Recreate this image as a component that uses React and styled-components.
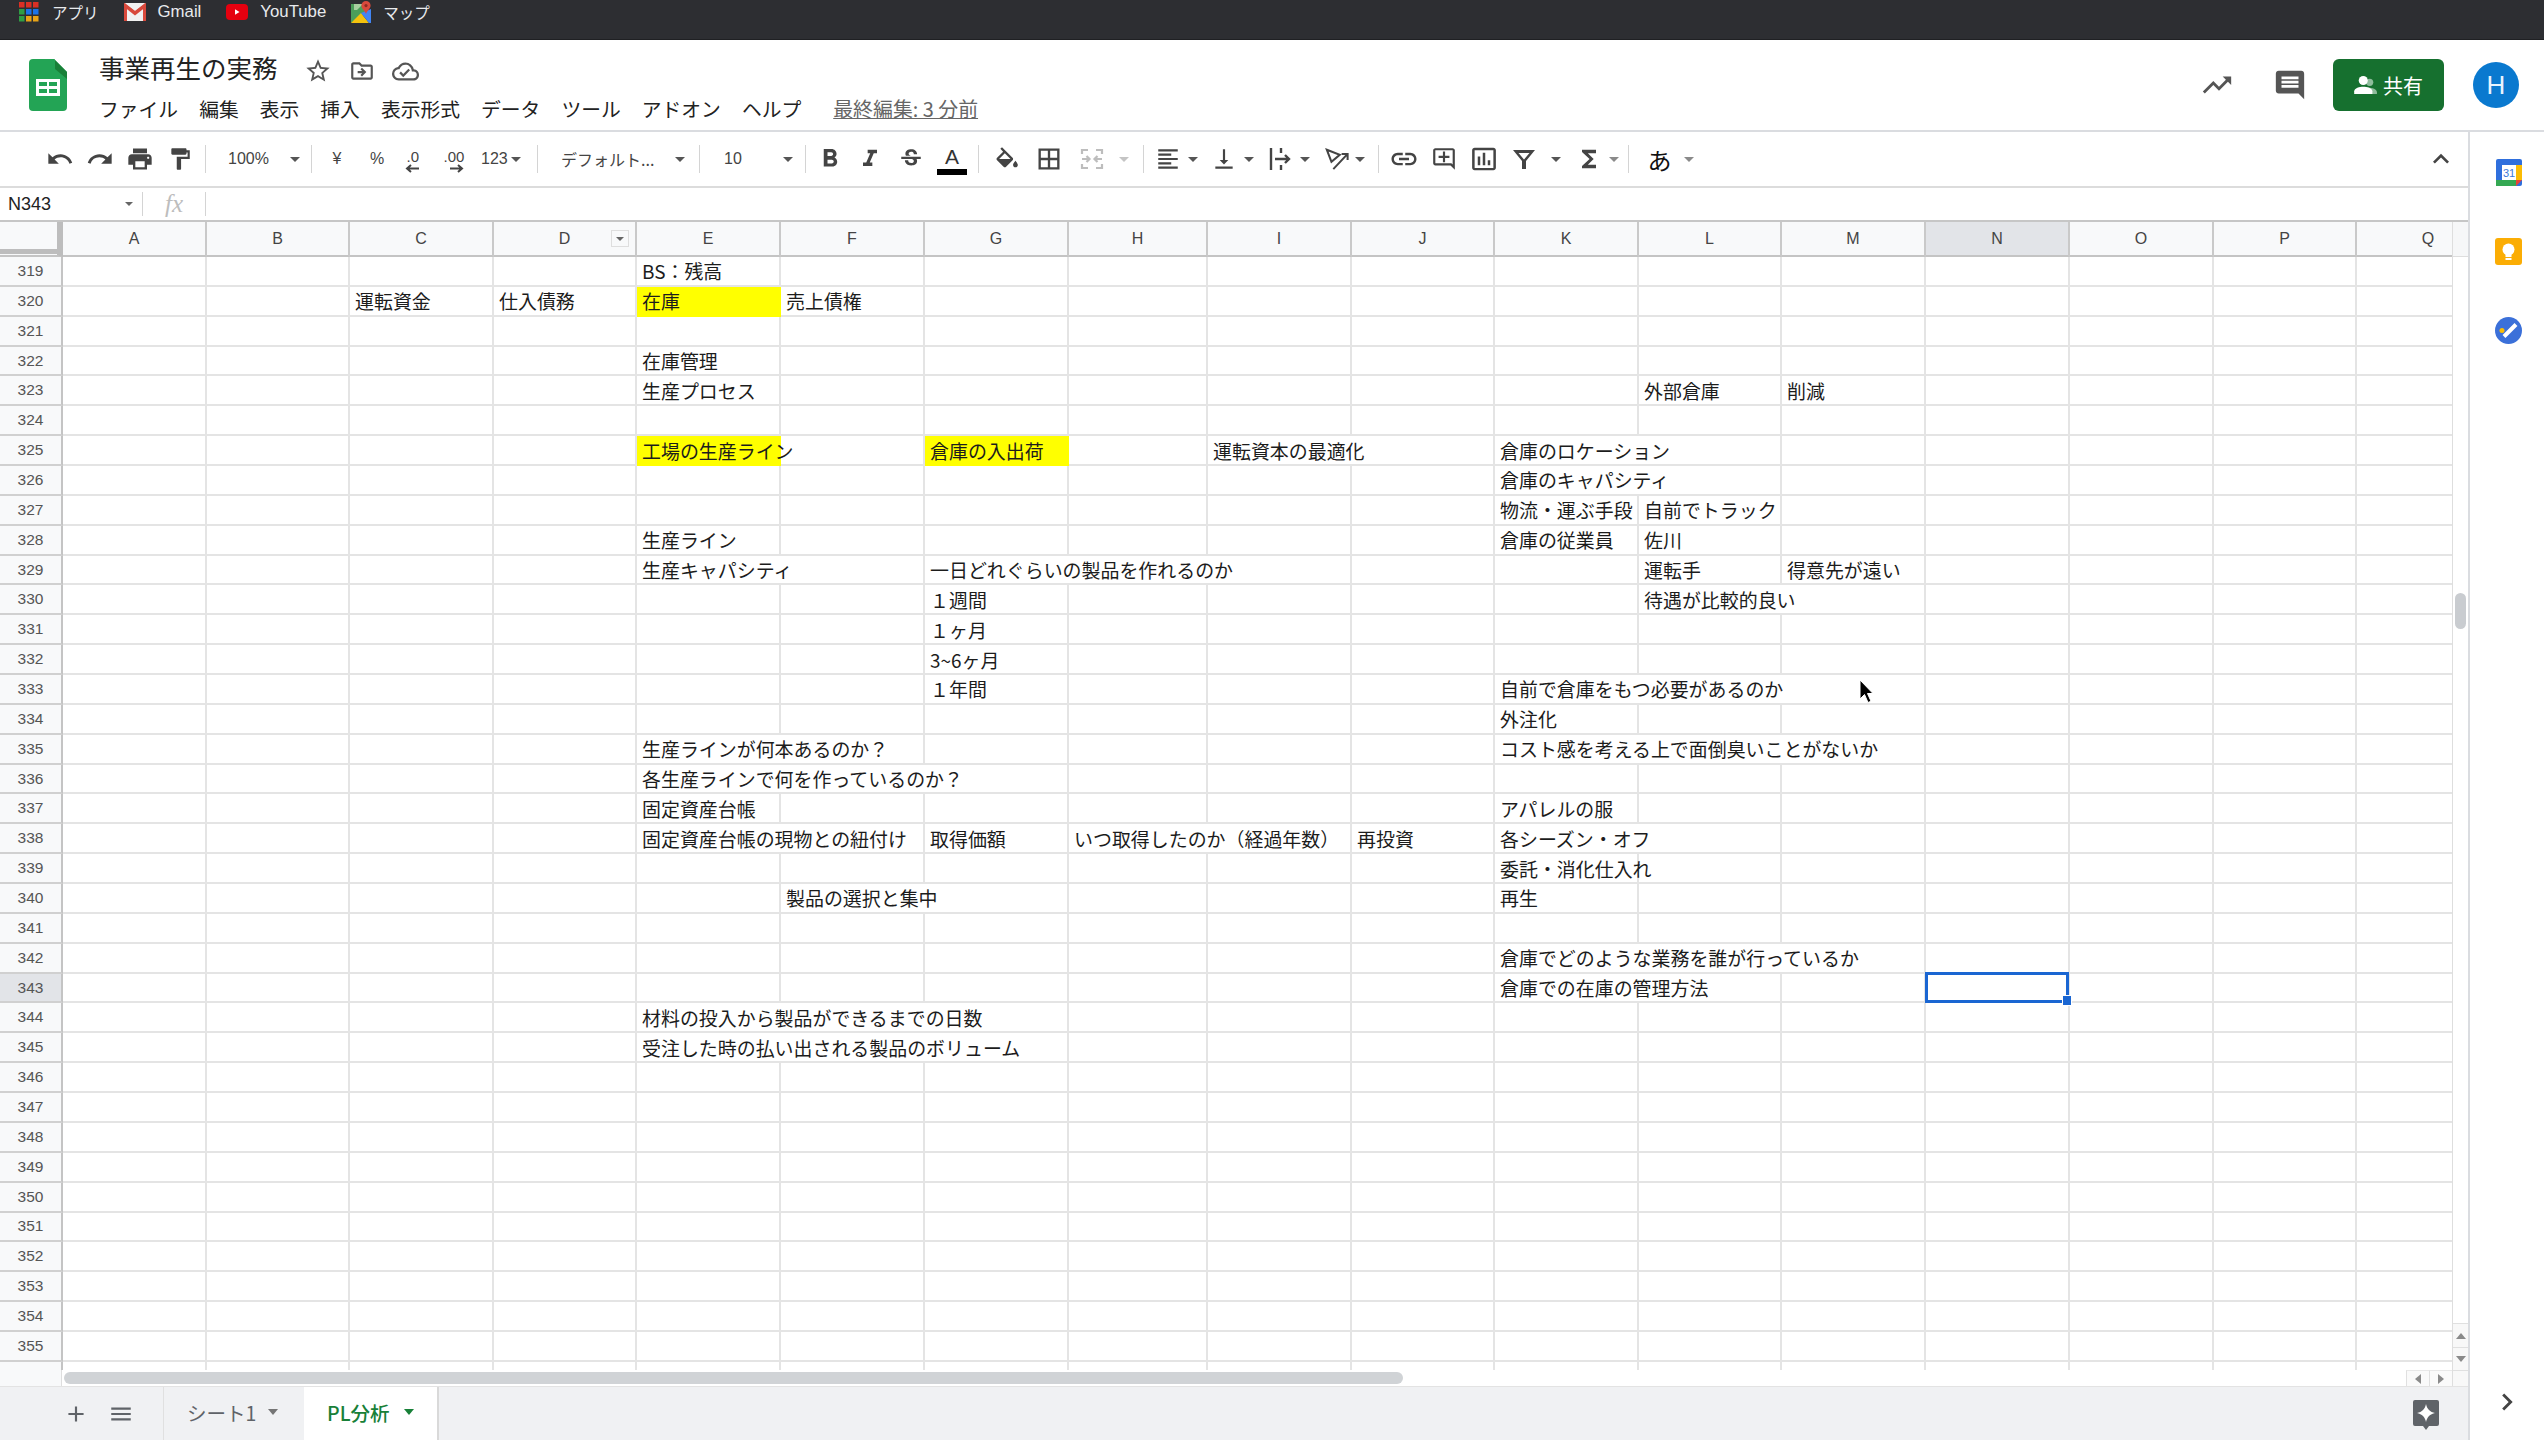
import React from 'react';
import styled, { createGlobalStyle } from 'styled-components';
import {
  MdUndo, MdRedo, MdPrint, MdFormatPaint, MdFormatBold, MdFormatItalic, MdStrikethroughS,
  MdBorderAll, MdFormatAlignLeft, MdVerticalAlignBottom, MdLink, MdOutlineAddComment,
  MdInsertChartOutlined, MdKeyboardArrowUp, MdStarBorder, MdOutlineDriveFileMove,
  MdOutlineCloudDone, MdTrendingUp, MdComment, MdAdd, MdMenu, MdChevronRight, MdFunctions,
} from 'react-icons/md';

const SANS = '"Liberation Sans", "Noto Sans CJK JP", sans-serif';
const JP = '"Noto Sans CJK JP", "Liberation Sans", sans-serif';

const GlobalStyle = createGlobalStyle`
  html, body { margin: 0; padding: 0; background: #fff; }
  body { font-family: ${SANS}; color: #222; }
  * { box-sizing: border-box; }
`;

const Page = styled.div`
  position: relative;
  width: 2544px;
  height: 1440px;
  display: flex;
  flex-direction: column;
  overflow: hidden;
`;

/* browser bookmarks */
const BookmarkBar = styled.div`
  height: 40px;
  flex: none;
  display: flex;
  gap: 25px;
  padding-left: 19px;
  background: #2d2e32;
  border-bottom: 1px solid #1f2023;
`;
const Bookmark = styled.div`
  height: 24px;
  display: flex;
  align-items: center;
  gap: ${p => p.$gap || 12}px;
  color: #e8eaed;
  font-size: ${p => (p.$jp ? 15.5 : 16.8)}px;
  font-family: ${p => (p.$jp ? JP : SANS)};
`;

/* doc header */
const DocHeader = styled.header`
  height: 92px;
  flex: none;
  display: flex;
  padding-left: 29px;
  border-bottom: 2px solid #dadce0;
`;
const LogoWrap = styled.div`
  padding-top: 19px;
  margin-right: 32px;
`;
const TitleBlock = styled.div`
  padding-top: 14px;
  display: flex;
  flex-direction: column;
`;
const TitleRow = styled.div`
  height: 34px;
  display: flex;
  align-items: center;
  gap: 17px;
  color: #555;
`;
const Title = styled.div`
  align-self: flex-start;
  margin-top: -6px;
  margin-right: 9px;
  font-family: ${JP};
  font-size: 25.5px;
  color: #222;
  white-space: nowrap;
`;
const MenuRow = styled.nav`
  margin-top: 5px;
  height: 30px;
  display: flex;
  align-items: center;
  gap: 21px;
`;
const MenuItem = styled.span`
  font-family: ${JP};
  font-size: 19.8px;
  color: #222;
  white-space: nowrap;
`;
const LastEdit = styled.span`
  margin-left: 11px;
  font-family: ${JP};
  font-size: 19.9px;
  color: #666;
  text-decoration: underline;
  white-space: nowrap;
`;
const HeaderActions = styled.div`
  margin-left: auto;
  padding-right: 25px;
  display: flex;
  align-items: center;
  color: #555;
`;
const ActionIcon = styled.div`
  display: flex;
  margin-right: ${p => p.$mr}px;
`;
const ShareButton = styled.div`
  width: 111px;
  height: 52px;
  margin-right: 29px;
  display: flex;
  align-items: center;
  justify-content: center;
  gap: 5px;
  background: #16702f;
  border-radius: 6px;
  color: #fff;
  font-family: ${JP};
  font-size: 20px;
`;
const Avatar = styled.div`
  width: 46px;
  height: 46px;
  border-radius: 50%;
  background: #0a79cf;
  color: #e8f4ff;
  display: flex;
  align-items: center;
  justify-content: center;
  font-size: 26px;
`;

const Workspace = styled.div`
  flex: 1;
  min-height: 0;
  display: flex;
`;
const MainColumn = styled.div`
  width: 2468px;
  flex: none;
  display: flex;
  flex-direction: column;
`;

/* toolbar */
const Toolbar = styled.div`
  height: 56px;
  flex: none;
  display: flex;
  align-items: center;
  padding-left: 40px;
  border-bottom: 2px solid #dcdcdc;
  color: #444;
`;
const Tool = styled.div`
  width: ${p => p.$w}px;
  height: 44px;
  flex: none;
  display: flex;
  align-items: center;
  justify-content: ${p => p.$justify || 'center'};
  gap: ${p => p.$gap || 0}px;
  padding: ${p => p.$pad || 0};
  font-size: 16px;
  color: ${p => (p.$off ? '#bdbdbd' : '#444')};
`;
const ToolDivider = styled.div`
  width: 1px;
  height: 28px;
  flex: none;
  margin: 0 5px;
  background: #d4d4d4;
`;
const Caret = styled.span`
  width: 0;
  height: 0;
  flex: none;
  border-left: 5px solid transparent;
  border-right: 5px solid transparent;
  border-top: 5px solid ${p => (p.$off ? '#c4c4c4' : p.$soft ? '#8a8a8a' : '#555')};
`;
const DecimalStack = styled.div`
  display: flex;
  flex-direction: column;
  align-items: flex-end;
  line-height: 15px;
  font-size: 15px;
  padding-top: 3px;
`;
const ColorA = styled.div`
  width: 30px;
  display: flex;
  flex-direction: column;
  align-items: center;
  font-size: 21px;
  line-height: 22px;
  color: #333;
  padding-top: 3px;
`;
const ColorBar = styled.div`
  width: 30px;
  height: 6px;
  margin-top: 1px;
  background: #000;
`;
const Kana = styled.span`
  font-family: ${JP};
  font-size: ${p => p.$size || 16}px;
  color: ${p => p.$color || 'inherit'};
`;
const CollapseTool = styled.div`
  margin-left: auto;
  margin-right: 7px;
  width: 40px;
  display: flex;
  justify-content: center;
  color: #444;
`;

/* formula bar */
const FormulaBar = styled.div`
  height: 34px;
  flex: none;
  display: flex;
  align-items: center;
  border-bottom: 2px solid #c6c6c6;
`;
const NameBox = styled.div`
  width: 142px;
  padding: 0 9px 0 8px;
  display: flex;
  align-items: center;
  justify-content: space-between;
  font-size: 18px;
  color: #222;
`;
const SmallCaret = styled.span`
  width: 0;
  height: 0;
  border-left: 4px solid transparent;
  border-right: 4px solid transparent;
  border-top: 4px solid #666;
`;
const FormulaDivider = styled.div`
  width: 1px;
  height: 24px;
  background: #d4d4d4;
`;
const FxLabel = styled.div`
  width: 62px;
  text-align: center;
  font-family: "Liberation Serif", serif;
  font-style: italic;
  font-size: 25px;
  line-height: 30px;
  color: #bdbdbd;
`;

/* sheet */
const SheetArea = styled.div`
  flex: 1;
  min-height: 0;
  display: flex;
`;
const GridPane = styled.div`
  width: 2452px;
  flex: none;
  display: flex;
  flex-direction: column;
  overflow: hidden;
`;
const COLUMN_TEMPLATE = '63px 144px 143px 144px 143px 144px 144px 144px 139px 144px 143px 144px 143px 144px 144px 144px 143px 144px';

const ColumnHeader = styled.div`
  height: 35px;
  flex: none;
  display: grid;
  grid-template-columns: ${COLUMN_TEMPLATE};
  background: #f8f9fa;
`;
const CornerCell = styled.div`
  border-right: 6px solid #bdbdbd;
  border-bottom: 2px solid #c4c4c4;
  display: flex;
  align-items: flex-end;
  padding-bottom: 1px;
`;
const CornerBar = styled.div`
  width: 100%;
  height: 5px;
  background: #bdbdbd;
`;
const ColumnCell = styled.div`
  position: relative;
  display: flex;
  align-items: center;
  justify-content: center;
  font-size: 16px;
  color: #444;
  padding-top: 1px;
  border-right: 2px solid #c9c9c9;
  border-bottom: 2px solid #c4c4c4;
  background: ${p => (p.$active ? '#e2e4e8' : 'transparent')};
`;
const FilterChip = styled.div`
  position: absolute;
  right: 6px;
  top: 8px;
  width: 18px;
  height: 17px;
  border: 1px solid #dedede;
  display: flex;
  align-items: center;
  justify-content: center;
`;
const RowsViewport = styled.div`
  flex: 1;
  min-height: 0;
  overflow: hidden;
`;
const SheetRow = styled.div`
  height: 29.865px;
  display: grid;
  grid-template-columns: ${COLUMN_TEMPLATE};
`;
const RowLabel = styled.div`
  display: flex;
  align-items: center;
  justify-content: center;
  font-size: 15.5px;
  color: #555;
  background: ${p => (p.$active ? '#e2e4e8' : '#f8f9fa')};
  border-right: 2px solid #c4c4c4;
  border-bottom: 2px solid #d0d0d0;
`;
const Cell = styled.div`
  grid-column: span ${p => p.$span || 1};
  position: ${p => (p.$selected ? 'relative' : 'static')};
  display: flex;
  align-items: center;
  padding-left: 5px;
  font-family: ${JP};
  font-size: 18.95px;
  color: #1c1c1c;
  white-space: nowrap;
  min-width: 0;
  background: ${p => p.$fill || 'transparent'};
  border-right: 2px solid ${p => p.$fill || '#e4e4e4'};
  border-bottom: 2px solid ${p => p.$fill || '#e4e4e4'};
`;
const Selection = styled.div`
  position: absolute;
  left: -1px;
  right: -1px;
  top: -2px;
  bottom: -2px;
  border: 3px solid #1a66d2;
`;
const FillHandle = styled.div`
  position: absolute;
  right: -6px;
  bottom: -6px;
  width: 10px;
  height: 11px;
  background: #1a66d2;
  border: 1px solid #fff;
`;
const HorizontalBar = styled.div`
  height: 16px;
  flex: none;
  display: flex;
  align-items: center;
  position: relative;
`;
const BarGutter = styled.div`
  width: 62px;
  height: 16px;
  flex: none;
  background: #f8f9fa;
  border-right: 1px solid #dedede;
`;
const BarThumb = styled.div`
  width: 1339px;
  height: 12px;
  margin-left: 2px;
  border-radius: 6px;
  background: #d0d3d6;
`;
const BarArrows = styled.div`
  margin-left: auto;
  display: flex;
`;
const BarArrow = styled.div`
  width: 23px;
  height: 16px;
  display: flex;
  align-items: center;
  justify-content: center;
  border-left: 1px solid #e0e0e0;
  border-top: 1px solid #e8e8e8;
  background: #fafafa;
`;
const VerticalRail = styled.div`
  width: 16px;
  flex: none;
  display: flex;
  flex-direction: column;
  border-left: 1px solid #dedede;
`;
const RailHead = styled.div`
  height: 35px;
  flex: none;
  background: #f6f7f8;
  border-bottom: 1px solid #dedede;
`;
const RailTrack = styled.div`
  flex: 1;
  position: relative;
`;
const RailThumb = styled.div`
  position: absolute;
  left: 2px;
  top: 336px;
  width: 11px;
  height: 36px;
  border-radius: 6px;
  background: #c9ccd0;
`;
const RailButton = styled.div`
  height: ${p => p.$h}px;
  flex: none;
  display: flex;
  align-items: center;
  justify-content: center;
  background: #f8f8f8;
  border-top: 1px solid #e0e0e0;
`;
const Triangle = styled.span`
  width: 0;
  height: 0;
  ${p => p.$dir === 'up' && 'border-left: 5px solid transparent; border-right: 5px solid transparent; border-bottom: 6px solid #8a8a8a;'}
  ${p => p.$dir === 'down' && 'border-left: 5px solid transparent; border-right: 5px solid transparent; border-top: 6px solid #8a8a8a;'}
  ${p => p.$dir === 'left' && 'border-top: 5px solid transparent; border-bottom: 5px solid transparent; border-right: 6px solid #8a8a8a;'}
  ${p => p.$dir === 'right' && 'border-top: 5px solid transparent; border-bottom: 5px solid transparent; border-left: 6px solid #8a8a8a;'}
`;

/* sheet tabs */
const TabBar = styled.div`
  height: 54px;
  flex: none;
  display: flex;
  align-items: stretch;
  background: #f0f1f3;
  border-top: 1px solid #e3e3e3;
  padding-left: 56px;
`;
const TabAction = styled.div`
  width: ${p => p.$w}px;
  display: flex;
  align-items: center;
  justify-content: center;
  color: #5f6368;
`;
const SheetTab = styled.div`
  width: ${p => p.$w}px;
  flex: none;
  display: flex;
  align-items: center;
  gap: ${p => p.$gap}px;
  padding: 0 0 3px 23px;
  font-family: ${JP};
  font-size: 19.5px;
  color: ${p => (p.$active ? '#188038' : '#5f6368')};
  font-weight: ${p => (p.$active ? 500 : 400)};
  background: ${p => (p.$active ? '#fff' : 'transparent')};
  border-left: ${p => (p.$first ? '1px solid #e0e0e0' : 'none')};
  border-right: ${p => (p.$active ? '2px solid #d9d9d9' : 'none')};
`;
const TabCaret = styled.span`
  width: 0;
  height: 0;
  border-left: 5px solid transparent;
  border-right: 5px solid transparent;
  border-top: 6px solid ${p => (p.$active ? '#188038' : '#757575')};
`;
const ExploreWrap = styled.div`
  margin-left: auto;
  margin-right: 29px;
  display: flex;
  align-items: center;
  padding-top: 3px;
`;

/* side panel */
const SidePanel = styled.aside`
  flex: 1;
  display: flex;
  flex-direction: column;
  align-items: center;
  padding: 27px 0 21px 3px;
  gap: 52px;
  border-left: 2px solid #dadce0;
`;
const PanelToggle = styled.div`
  margin-top: auto;
  margin-right: 4px;
  display: flex;
  color: #444;
`;

const CursorArrow = styled.svg`
  position: absolute;
  left: 1859px;
  top: 679px;
`;

const columnNames = 'ABCDEFGHIJKLMNOPQ'.split('');

const YELLOW = '#ffff00';
// col index -> [text, span, fill]
const sheetData = {
  319: { 4: ['BS：残高'] },
  320: { 2: ['運転資金'], 3: ['仕入債務'], 4: ['在庫', 1, YELLOW], 5: ['売上債権'] },
  322: { 4: ['在庫管理'] },
  323: { 4: ['生産プロセス'], 11: ['外部倉庫'], 12: ['削減'] },
  325: { 4: ['工場の生産ライン', 1, YELLOW], 6: ['倉庫の入出荷', 1, YELLOW], 8: ['運転資本の最適化', 2], 10: ['倉庫のロケーション', 2] },
  326: { 10: ['倉庫のキャパシティ', 2] },
  327: { 10: ['物流・運ぶ手段'], 11: ['自前でトラック'] },
  328: { 4: ['生産ライン'], 10: ['倉庫の従業員'], 11: ['佐川'] },
  329: { 4: ['生産キャパシティ', 2], 6: ['一日どれぐらいの製品を作れるのか', 3], 11: ['運転手'], 12: ['得意先が遠い'] },
  330: { 6: ['１週間'], 11: ['待遇が比較的良い', 2] },
  331: { 6: ['１ヶ月'] },
  332: { 6: ['3~6ヶ月'] },
  333: { 6: ['１年間'], 10: ['自前で倉庫をもつ必要があるのか', 3] },
  334: { 10: ['外注化'] },
  335: { 4: ['生産ラインが何本あるのか？', 2], 10: ['コスト感を考える上で面倒臭いことがないか', 3] },
  336: { 4: ['各生産ラインで何を作っているのか？', 3] },
  337: { 4: ['固定資産台帳'], 10: ['アパレルの服'] },
  338: { 4: ['固定資産台帳の現物との紐付け', 2], 6: ['取得価額'], 7: ['いつ取得したのか（経過年数）', 2], 9: ['再投資'], 10: ['各シーズン・オフ', 2] },
  339: { 10: ['委託・消化仕入れ'] },
  340: { 5: ['製品の選択と集中', 2], 10: ['再生'] },
  342: { 10: ['倉庫でどのような業務を誰が行っているか', 3] },
  343: { 10: ['倉庫での在庫の管理方法', 2] },
  344: { 4: ['材料の投入から製品ができるまでの日数', 3] },
  345: { 4: ['受注した時の払い出される製品のボリューム', 3] },
};

const ACTIVE_ROW = 343;
const ACTIVE_COL = 13;

function renderCells(rowNumber) {
  const data = sheetData[rowNumber] || {};
  const cells = [];
  for (let col = 0; col < columnNames.length; col++) {
    const entry = data[col];
    if (entry) {
      const [text, span = 1, fill] = entry;
      cells.push(<Cell key={col} $span={span} $fill={fill}>{text}</Cell>);
      col += span - 1;
    } else {
      const selected = rowNumber === ACTIVE_ROW && col === ACTIVE_COL;
      cells.push(
        <Cell key={col} $selected={selected}>
          {selected && <Selection><FillHandle /></Selection>}
        </Cell>
      );
    }
  }
  return cells;
}

const rowNumbers = Array.from({ length: 38 }, (_, i) => 319 + i);

function SheetsLogo() {
  return (
    <svg width="38" height="52" viewBox="0 0 38 52">
      <path d="M4 0H25L38 13V48a4 4 0 0 1-4 4H4a4 4 0 0 1-4-4V4a4 4 0 0 1 4-4z" fill="#23a455" />
      <path d="M25 0L38 13V20L26 10V0z" fill="#188038" />
      <rect x="7" y="20" width="24" height="17" fill="#fff" />
      <rect x="10" y="23" width="8" height="4" fill="#23a455" />
      <rect x="20" y="23" width="8" height="4" fill="#23a455" />
      <rect x="10" y="30" width="8" height="4" fill="#23a455" />
      <rect x="20" y="30" width="8" height="4" fill="#23a455" />
    </svg>
  );
}

function AppsIcon() {
  const colors = ['#d93025', '#d93025', '#d93025', '#2f9e44', '#1a73e8', '#1a73e8', '#2f9e44', '#e8a317', '#e8a317'];
  return (
    <svg width="20" height="20" viewBox="0 0 20 20">
      {colors.map((c, i) => (
        <rect key={i} x={(i % 3) * 7} y={Math.floor(i / 3) * 7} width="5.5" height="5.5" fill={c} />
      ))}
    </svg>
  );
}

function GmailIcon() {
  return (
    <svg width="22" height="18" viewBox="0 0 22 18">
      <rect width="22" height="18" rx="1.5" fill="#f1f1f1" />
      <path d="M1.5 18V3L11 10.5 20.5 3V18" fill="none" stroke="#d8493c" strokeWidth="3" />
      <path d="M0 1L11 9.5 22 1" fill="none" stroke="#d8493c" strokeWidth="2.4" />
    </svg>
  );
}

function YoutubeIcon() {
  return (
    <svg width="22" height="16" viewBox="0 0 22 16">
      <rect width="22" height="16" rx="4" fill="#e5000f" />
      <path d="M9 5.2L13.5 8 9 10.8z" fill="#fff" />
    </svg>
  );
}

function MapsIcon() {
  return (
    <svg width="20" height="22" viewBox="0 0 20 22">
      <path d="M0 3H14V12L0 22z" fill="#4b9e5a" />
      <path d="M0 22L10 12l8 10z" fill="#f4c20d" />
      <path d="M10 12L20 8v14h-2z" fill="#4285f4" />
      <path d="M3 3h9L6 9H3z" fill="#a8cfa0" />
      <path d="M15 0a4.6 4.6 0 0 1 4.6 4.6C19.6 8 16 10 15 13c-1-3-4.6-5-4.6-8.400A4.600 4.600 0 0 1 15 0z" fill="#d8493c" />
      <circle cx="15" cy="4.600" r="1.600" fill="#8f2a21" />
    </svg>
  );
}

function ShareIcon() {
  return (
    <svg width="24" height="20" viewBox="0 0 26 22">
      <circle cx="17" cy="8" r="4" fill="#8fbc9c" />
      <path d="M15 14c5 0 10 1.500 10 5v2H17z" fill="#8fbc9c" />
      <circle cx="10" cy="6" r="5" fill="#fff" />
      <path d="M0 21v-3c0-3.500 6-5 10-5s10 1.500 10 5v3z" fill="#fff" />
    </svg>
  );
}

function FillIcon() {
  return (
    <svg width="26" height="26" viewBox="0 0 22 20" fill="currentColor">
      <path d="M16.560 8.940L7.620 0 6.210 1.410l2.380 2.380-5.150 5.150c-.590.590-.590 1.540 0 2.120l5.500 5.500c.290.290.680.440 1.060.440s.770-.150 1.060-.440l5.500-5.500c.590-.580.590-1.530 0-2.120zM5.210 10L10 5.210 14.790 10H5.210zM19 11.500s-2 2.170-2 3.500c0 1.100.900 2 2 2s2-.900 2-2c0-1.330-2-3.500-2-3.500z" />
      <path d="M5.210 10H14.790L9.900 15z" />
    </svg>
  );
}

function MergeIcon() {
  return (
    <svg width="24" height="24" viewBox="0 0 24 24" fill="none" stroke="currentColor" strokeWidth="2.200">
      <path d="M2 7V3h6M16 3h6v4M2 17v4h6M16 21h6v-4" />
      <path d="M2 12h7M6.500 9l3 3-3 3M22 12h-7M17.500 9l-3 3 3 3" />
    </svg>
  );
}

function WrapIcon() {
  return (
    <svg width="24" height="24" viewBox="0 0 24 24" fill="none" stroke="currentColor" strokeWidth="2.400">
      <path d="M3 1v22" />
      <path d="M13 1v5M13 18v5" />
      <path d="M7 12h14M17 8l4 4-4 4" />
    </svg>
  );
}

function RotateIcon() {
  return (
    <svg width="24" height="24" viewBox="0 0 26 24" fill="none" stroke="currentColor" strokeWidth="2.200">
      <path d="M2 2l14 5.500L7 15z" />
      <path d="M9 23L24 7M18 6.500h6.500V13" />
    </svg>
  );
}

function FilterIcon() {
  return (
    <svg width="24" height="24" viewBox="0 0 24 24" fill="currentColor">
      <path d="M1 3h22l-9 11v8h-4v-8zM6.500 6l5.500 6.500L17.500 6z" fillRule="evenodd" />
    </svg>
  );
}

function CalendarIcon() {
  return (
    <svg width="26" height="27" viewBox="0 0 26 27">
      <rect width="26" height="27" rx="2" fill="#2f6fdd" />
      <rect x="20" y="6" width="6" height="15" fill="#fbbc04" />
      <rect y="21" width="20" height="6" fill="#34a853" />
      <path d="M20 21h6l-6 6z" fill="#ea4335" />
      <rect x="6" y="6" width="14" height="15" fill="#fff" />
      <text x="13" y="18" textAnchor="middle" fontSize="11" fontFamily="Liberation Sans" fill="#3c78d8">31</text>
    </svg>
  );
}

function KeepIcon() {
  return (
    <svg width="27" height="27" viewBox="0 0 27 27">
      <rect width="27" height="27" rx="3" fill="#fbad04" />
      <circle cx="13.500" cy="11.500" r="6" fill="#fff" />
      <rect x="10.500" y="15" width="6" height="4" fill="#fff" />
      <rect x="10.500" y="20" width="6" height="2" fill="#fff" />
    </svg>
  );
}

function TasksIcon() {
  return (
    <svg width="27" height="27" viewBox="0 0 27 27">
      <circle cx="13.500" cy="13.500" r="13.500" fill="#3b70d9" />
      <circle cx="7" cy="13.500" r="2.500" fill="#fbbc04" />
      <path d="M9 19.500L21 7.500" stroke="#fff" strokeWidth="4" />
    </svg>
  );
}

function ExploreIcon() {
  return (
    <svg width="26" height="30" viewBox="0 0 26 30">
      <path d="M2 0h22a2 2 0 0 1 2 2v22a2 2 0 0 1-2 2h-8l-3 4-3-4H2a2 2 0 0 1-2-2V2a2 2 0 0 1 2-2z" fill="#5f6368" />
      <path d="M13 4c1 5 4 8 9 9-5 1-8 4-9 9-1-5-4-8-9-9 5-1 8-4 9-9z" fill="#fff" />
    </svg>
  );
}

export default function App() {
  return (
    <Page>
      <GlobalStyle />
      <BookmarkBar>
        <Bookmark $jp $gap={13}><AppsIcon />アプリ</Bookmark>
        <Bookmark><GmailIcon />Gmail</Bookmark>
        <Bookmark><YoutubeIcon />YouTube</Bookmark>
        <Bookmark $jp><MapsIcon />マップ</Bookmark>
      </BookmarkBar>

      <DocHeader>
        <LogoWrap><SheetsLogo /></LogoWrap>
        <TitleBlock>
          <TitleRow>
            <Title>事業再生の実務</Title>
            <MdStarBorder size={28} />
            <MdOutlineDriveFileMove size={26} />
            <MdOutlineCloudDone size={27} />
          </TitleRow>
          <MenuRow>
            {['ファイル', '編集', '表示', '挿入', '表示形式', 'データ', 'ツール', 'アドオン', 'ヘルプ'].map(m => (
              <MenuItem key={m}>{m}</MenuItem>
            ))}
            <LastEdit>最終編集: 3 分前</LastEdit>
          </MenuRow>
        </TitleBlock>
        <HeaderActions>
          <ActionIcon $mr={39}><MdTrendingUp size={34} /></ActionIcon>
          <ActionIcon $mr={26}><MdComment size={34} /></ActionIcon>
          <ShareButton><ShareIcon />共有</ShareButton>
          <Avatar>H</Avatar>
        </HeaderActions>
      </DocHeader>

      <Workspace>
        <MainColumn>
          <Toolbar>
            <Tool $w={40}><MdUndo size={28} /></Tool>
            <Tool $w={40}><MdRedo size={28} /></Tool>
            <Tool $w={40}><MdPrint size={28} /></Tool>
            <Tool $w={40}><MdFormatPaint size={26} /></Tool>
            <ToolDivider />
            <Tool $w={95} $justify="space-between" $pad="0 6px 0 17px">100%<Caret /></Tool>
            <ToolDivider />
            <Tool $w={40}>¥</Tool>
            <Tool $w={40}>%</Tool>
            <Tool $w={30}>
              <DecimalStack>.0<svg width="14" height="9" viewBox="0 0 14 9"><path d="M14 4.500H3M6 1L2 4.500 6 8" fill="none" stroke="#444" strokeWidth="2" /></svg></DecimalStack>
            </Tool>
            <Tool $w={54}>
              <DecimalStack>.00<svg width="14" height="9" viewBox="0 0 14 9"><path d="M0 4.500H11M8 1l4 3.500L8 8" fill="none" stroke="#444" strokeWidth="2" /></svg></DecimalStack>
            </Tool>
            <Tool $w={51} $justify="flex-start" $gap={3}>123<Caret /></Tool>
            <ToolDivider />
            <Tool $w={151} $justify="space-between" $pad="0 9px 0 18px"><Kana>デフォルト...</Kana><Caret /></Tool>
            <ToolDivider />
            <Tool $w={95} $justify="space-between" $pad="0 7px 0 19px">10<Caret /></Tool>
            <ToolDivider />
            <Tool $w={38}><MdFormatBold size={30} /></Tool>
            <Tool $w={42}><MdFormatItalic size={28} /></Tool>
            <Tool $w={40}><MdStrikethroughS size={26} /></Tool>
            <Tool $w={42}><ColorA>A<ColorBar /></ColorA></Tool>
            <ToolDivider />
            <Tool $w={44}><FillIcon /></Tool>
            <Tool $w={42}><MdBorderAll size={28} /></Tool>
            <Tool $w={68} $gap={15} $off><MergeIcon /><Caret $off /></Tool>
            <ToolDivider />
            <Tool $w={55} $gap={7}><MdFormatAlignLeft size={26} /><Caret /></Tool>
            <Tool $w={57} $gap={7}><MdVerticalAlignBottom size={26} /><Caret /></Tool>
            <Tool $w={55} $gap={8}><WrapIcon /><Caret /></Tool>
            <Tool $w={57} $gap={6}><RotateIcon /><Caret /></Tool>
            <ToolDivider />
            <Tool $w={40}><MdLink size={30} /></Tool>
            <Tool $w={40}><MdOutlineAddComment size={26} /></Tool>
            <Tool $w={39}><MdInsertChartOutlined size={30} /></Tool>
            <Tool $w={67} $gap={15}><FilterIcon /><Caret /></Tool>
            <Tool $w={53} $gap={6}><MdFunctions size={28} /><Caret $soft /></Tool>
            <ToolDivider />
            <Tool $w={73} $gap={12}><Kana $size={24} $color="#111">あ</Kana><Caret $soft /></Tool>
            <CollapseTool><MdKeyboardArrowUp size={32} /></CollapseTool>
          </Toolbar>

          <FormulaBar>
            <NameBox>N343<SmallCaret /></NameBox>
            <FormulaDivider />
            <FxLabel>fx</FxLabel>
            <FormulaDivider />
          </FormulaBar>

          <SheetArea>
            <GridPane>
              <ColumnHeader>
                <CornerCell><CornerBar /></CornerCell>
                {columnNames.map((name, i) => (
                  <ColumnCell key={name} $active={i === ACTIVE_COL}>
                    {name}
                    {name === 'D' && <FilterChip><SmallCaret /></FilterChip>}
                  </ColumnCell>
                ))}
              </ColumnHeader>
              <RowsViewport>
                {rowNumbers.map(n => (
                  <SheetRow key={n}>
                    <RowLabel $active={n === ACTIVE_ROW}>{n <= 355 ? n : ''}</RowLabel>
                    {renderCells(n)}
                  </SheetRow>
                ))}
              </RowsViewport>
              <HorizontalBar>
                <BarGutter />
                <BarThumb />
                <BarArrows>
                  <BarArrow><Triangle $dir="left" /></BarArrow>
                  <BarArrow><Triangle $dir="right" /></BarArrow>
                </BarArrows>
              </HorizontalBar>
            </GridPane>
            <VerticalRail>
              <RailHead />
              <RailTrack><RailThumb /></RailTrack>
              <RailButton $h={24}><Triangle $dir="up" /></RailButton>
              <RailButton $h={23}><Triangle $dir="down" /></RailButton>
              <RailButton $h={16} />
            </VerticalRail>
          </SheetArea>

          <TabBar>
            <TabAction $w={40}><MdAdd size={26} /></TabAction>
            <TabAction $w={50}><MdMenu size={26} /></TabAction>
            <TabAction $w={17} />
            <SheetTab $w={141} $gap={12} $first>シート1<TabCaret /></SheetTab>
            <SheetTab $w={135} $gap={14} $active>PL分析<TabCaret $active /></SheetTab>
            <ExploreWrap><ExploreIcon /></ExploreWrap>
          </TabBar>
        </MainColumn>

        <SidePanel>
          <CalendarIcon />
          <KeepIcon />
          <TasksIcon />
          <PanelToggle><MdChevronRight size={34} /></PanelToggle>
        </SidePanel>
      </Workspace>

      <CursorArrow width="14" height="26" viewBox="0 0 14 26">
        <path d="M1 1v19l4.500-4.500 3.500 8 3-1.300-3.500-7.700H14z" fill="#000" stroke="#fff" strokeWidth="1" />
      </CursorArrow>
    </Page>
  );
}
